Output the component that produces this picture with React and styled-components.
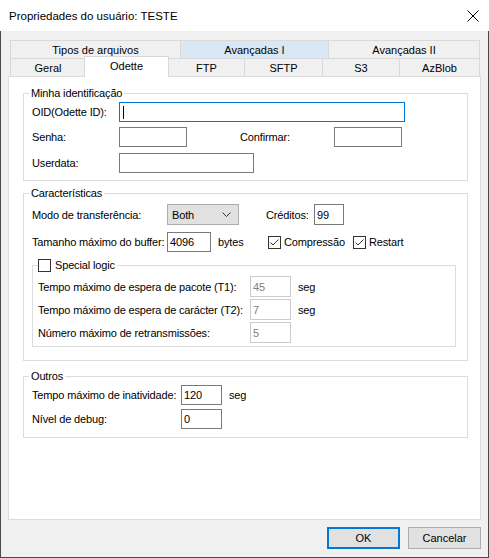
import React from 'react'
import styled, { createGlobalStyle } from 'styled-components'

const GlobalStyle = createGlobalStyle`
  body {
    margin: 0;
    font-family: 'Liberation Sans', Arial, sans-serif;
    font-size: 11px;
    color: #000;
  }
  * {
    box-sizing: border-box;
  }
`

const topTabs = [
  { label: 'Tipos de arquivos', width: 170 },
  { label: 'Avançadas I', width: 148, hover: true },
  { label: 'Avançadas II' },
]

const bottomTabs = [
  { label: 'Geral', width: 75 },
  { label: 'Odette', width: 83, active: true },
  { label: 'FTP', width: 76 },
  { label: 'SFTP', width: 78 },
  { label: 'S3', width: 77 },
  { label: 'AzBlob' },
]

const CheckMark = () => (
  <svg width='11' height='11' viewBox='0 0 11 11'>
    <polyline points='1.5,5.5 4,8 9.5,2.5' fill='none' stroke='#333' strokeWidth='1' />
  </svg>
)

const Check = ({ checked }) => <CheckBox>{checked && <CheckMark />}</CheckBox>

const App = () => {
  return (
    <>
      <GlobalStyle />
      <Window>
        <TitleBar>
          <Title>Propriedades do usuário: TESTE</Title>
          <svg width='12' height='12' viewBox='0 0 12 12'>
            <path d='M0.5 0.5 L11.5 11.5 M11.5 0.5 L0.5 11.5' stroke='#000' strokeWidth='1' />
          </svg>
        </TitleBar>

        <Body>
          <Tabs>
            <TabRow>
              {topTabs.map((tab) => (
                <Tab key={tab.label} width={tab.width} hover={tab.hover}>
                  {tab.label}
                </Tab>
              ))}
            </TabRow>
            <TabRow>
              {bottomTabs.map((tab) => (
                <Tab key={tab.label} width={tab.width} active={tab.active}>
                  {tab.label}
                </Tab>
              ))}
            </TabRow>
          </Tabs>

          <Panel>
            <Group>
              <Legend>Minha identificação</Legend>
              <Row>
                <Label w={87}>OID(Odette ID):</Label>
                <Field w={286} focused>
                  <Caret />
                </Field>
              </Row>
              <Row mt={5}>
                <Label w={87}>Senha:</Label>
                <Field w={68} />
                <Label w={94} ml={53}>Confirmar:</Label>
                <Field w={68} />
              </Row>
              <Row mt={6}>
                <Label w={87}>Userdata:</Label>
                <Field w={135} />
              </Row>
            </Group>

            <Group mt={5} pb={13}>
              <Legend>Características</Legend>
              <Row h={21} mt={2}>
                <Label w={135}>Modo de transferência:</Label>
                <Select>
                  Both
                  <svg width='9' height='5' viewBox='0 0 9 5'>
                    <polyline points='0.5,0.5 4.5,4.5 8.5,0.5' fill='none' stroke='#333' strokeWidth='1' />
                  </svg>
                </Select>
                <Label w={48} ml={27}>Créditos:</Label>
                <Field w={30}>99</Field>
              </Row>
              <Row mt={7}>
                <Label w={135}>Tamanho máximo do buffer:</Label>
                <Field w={44}>4096</Field>
                <Label w={50} ml={7}>bytes</Label>
                <CheckLabel w={85}>
                  <Check checked />
                  Compressão
                </CheckLabel>
                <CheckLabel>
                  <Check checked />
                  Restart
                </CheckLabel>
              </Row>

              <SubGroup>
                <SubLegend>
                  <Check />
                  Special logic
                </SubLegend>
                <Row h={21} mt={4}>
                  <Label w={212}>Tempo máximo de espera de pacote (T1):</Label>
                  <Field w={41} disabled>45</Field>
                  <Label ml={7}>seg</Label>
                </Row>
                <Row h={21} mt={2}>
                  <Label w={212}>Tempo máximo de espera de carácter (T2):</Label>
                  <Field w={41} disabled>7</Field>
                  <Label ml={7}>seg</Label>
                </Row>
                <Row h={21} mt={2}>
                  <Label w={212}>Número máximo de retransmissões:</Label>
                  <Field w={41} disabled>5</Field>
                </Row>
              </SubGroup>
            </Group>

            <Group mt={8} pb={8}>
              <Legend>Outros</Legend>
              <Row mt={0}>
                <Label w={149}>Tempo máximo de inatividade:</Label>
                <Field w={41}>120</Field>
                <Label ml={7}>seg</Label>
              </Row>
              <Row mt={4}>
                <Label w={149}>Nível de debug:</Label>
                <Field w={41}>0</Field>
              </Row>
            </Group>
          </Panel>

          <Buttons>
            <Button primary>OK</Button>
            <Button>Cancelar</Button>
          </Buttons>
        </Body>
      </Window>
    </>
  )
}

const Window = styled.div`
  width: 489px;
  height: 558px;
  display: flex;
  flex-direction: column;
  background: #f0f0f0;
  box-shadow: inset 1px 0 #4a4a4a, inset -1px 0 #4a4a4a, inset 0 -1px #4a4a4a;
`

const TitleBar = styled.div`
  height: 31px;
  flex: none;
  display: flex;
  align-items: center;
  justify-content: space-between;
  padding: 0 10px 0 9px;
  background: #fff;
`

const Title = styled.span`
  font-size: 11.5px;
`

const Body = styled.div`
  flex: 1;
  display: flex;
  flex-direction: column;
  padding: 9px 8px 0 8px;
`

const Tabs = styled.div`
  margin: 0 1px 0 2px;
  display: flex;
  flex-direction: column;
`

const TabRow = styled.div`
  height: 18px;
  display: flex;
`

const Tab = styled.div`
  position: relative;
  flex: ${({ width }) => (width ? `0 0 ${width}px` : '1')};
  display: flex;
  align-items: center;
  justify-content: center;
  border: 1px solid #d9d9d9;
  border-right: none;
  border-bottom: none;
  background: ${({ hover }) => (hover ? '#d9e8f6' : '#f0f0f0')};
  white-space: nowrap;

  &:last-child {
    border-right: 1px solid #d9d9d9;
  }

  ${({ active }) =>
    active &&
    `
    z-index: 1;
    background: #fff;
    height: 21px;
    margin: -2px -1px 0 -1px;
    flex-basis: 85px;
    border-right: 1px solid #d9d9d9;
    padding-bottom: 3px;
  `}
`

const Panel = styled.div`
  height: 444px;
  background: #fff;
  border: 1px solid #dcdcdc;
  padding: 9px 12px 0 14px;
  letter-spacing: -0.15px;
`

const Group = styled.fieldset`
  margin: ${({ mt }) => mt || 0}px 0 0 0;
  padding: 2px 8px ${({ pb }) => (pb === undefined ? 7 : pb)}px 8px;
  border: 1px solid #dcdcdc;
  min-width: 0;
`

const Legend = styled.legend`
  padding: 0 2px;
  margin-left: -3px;
  line-height: 14px;
`

const SubGroup = styled.fieldset`
  width: 424px;
  margin: 6px 0 0 0;
  padding: 0 5px 3px 5px;
  border: 1px solid #dcdcdc;
  min-width: 0;
`

const SubLegend = styled.legend`
  padding: 0 2px 0 0;
  height: 14px;
  display: flex;
  align-items: center;
  gap: 4px;
`

const Row = styled.div`
  display: flex;
  align-items: center;
  height: ${({ h }) => h || 20}px;
  margin-top: ${({ mt }) => mt || 0}px;
`

const Label = styled.span`
  flex: none;
  width: ${({ w }) => (w ? `${w}px` : 'auto')};
  margin-left: ${({ ml }) => ml || 0}px;
  white-space: nowrap;
`

const Field = styled.div`
  flex: none;
  width: ${({ w }) => w}px;
  height: 100%;
  display: flex;
  align-items: center;
  padding-left: 2px;
  background: #fff;
  border: 1px solid ${({ focused, disabled }) => (focused ? '#0078d7' : disabled ? '#cccccc' : '#7a7a7a')};
  color: ${({ disabled }) => (disabled ? '#808080' : '#000')};
`

const Caret = styled.span`
  width: 1px;
  height: 13px;
  background: #000;
  margin-left: 1px;
`

const Select = styled.div`
  flex: none;
  width: 72px;
  height: 21px;
  display: flex;
  align-items: center;
  justify-content: space-between;
  padding: 0 7px 0 4px;
  background: #e1e1e1;
  border: 1px solid #adadad;
`

const CheckLabel = styled.label`
  flex: none;
  width: ${({ w }) => (w ? `${w}px` : 'auto')};
  display: flex;
  align-items: center;
  gap: 3px;
  white-space: nowrap;
`

const CheckBox = styled.span`
  flex: none;
  width: 13px;
  height: 13px;
  display: flex;
  align-items: center;
  justify-content: center;
  border: 1px solid #333;
  background: #fff;
`

const Buttons = styled.div`
  display: flex;
  justify-content: flex-end;
  gap: 8px;
  margin-top: 7px;
`

const Button = styled.div`
  width: 73px;
  height: 22px;
  display: flex;
  align-items: center;
  justify-content: center;
  background: #e1e1e1;
  border: ${({ primary }) => (primary ? '2px solid #0078d7' : '1px solid #adadad')};
`

export default App
